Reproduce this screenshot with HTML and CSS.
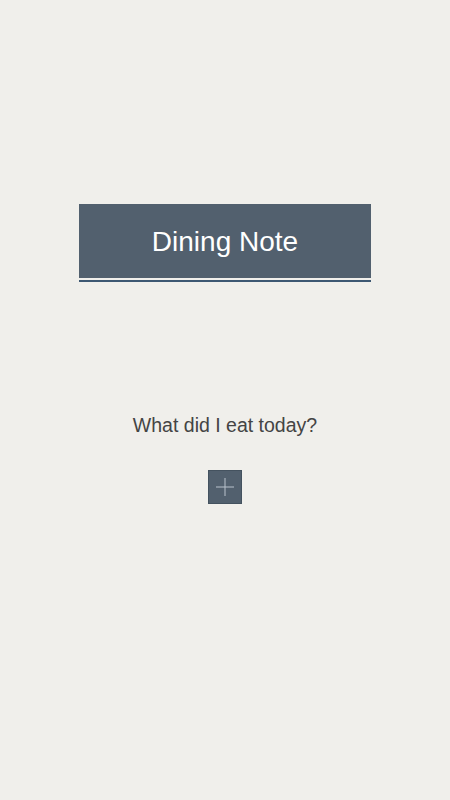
FILE: index.html
```html
<!DOCTYPE html>
<html lang="en">
<head>
    <meta charset="UTF-8">
    <meta name="viewport" content="width=device-width, initial-scale=1.0">
    <title>Dining Note</title>
    <link rel="stylesheet" href="styles.css">
</head>
<body>
    <div class="page">
        <header class="titulo">
            <h1>Dining Note</h1>
        </header>

        <main class="conteudo">
            <p class="pergunta">What did I eat today?</p>
            <button type="button" class="botao-adicionar" aria-label="Adicionar">
                <svg width="18" height="18" viewBox="0 0 18 18">
                    <path d="M9 0V18M0 9H18" stroke="#b9c2cc" stroke-width="1" fill="none"/>
                </svg>
            </button>
        </main>
    </div>
</body>
</html>
```

FILE: styles.css
```css
body {
    margin: 0;
    background-color: #f0efeb;
    font-family: "Liberation Sans", Arial, sans-serif;
}

.page {
    display: flex;
    flex-direction: column;
    align-items: center;
    min-height: 800px;
}

.titulo {
    width: 292px;
    margin-top: 204px;
    padding-bottom: 2px;
    border-bottom: 2px solid #3d5872;
}

.titulo h1 {
    margin: 0;
    height: 72px;
    padding-top: 2px;
    line-height: 72px;
    background-color: #52606e;
    color: #ffffff;
    font-size: 28px;
    font-weight: normal;
    text-align: center;
}

.conteudo {
    display: flex;
    flex-direction: column;
    align-items: center;
    margin-top: 129px;
}

.pergunta {
    margin: 0;
    color: #444444;
    font-size: 19.5px;
    line-height: 28px;
}

.botao-adicionar {
    display: flex;
    align-items: center;
    justify-content: center;
    width: 34px;
    height: 34px;
    margin-top: 31px;
    padding: 0;
    border: 1px solid #44525f;
    background-color: #52606e;
}
```
